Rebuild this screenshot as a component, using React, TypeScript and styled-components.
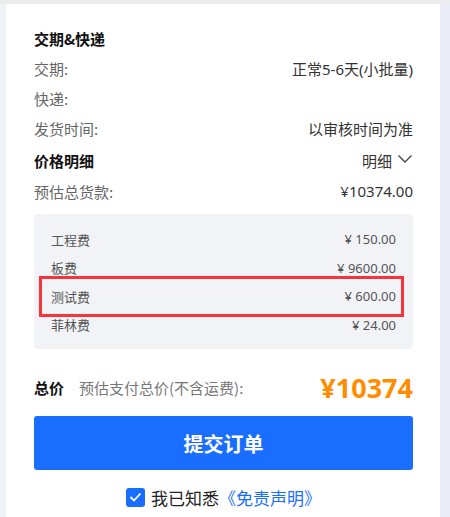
import React from "react";
import styled, { createGlobalStyle } from "styled-components";

const GlobalStyle = createGlobalStyle`
    html, body {
        margin: 0;
        padding: 0;
        background: #eef0f7;
        font-family: "Noto Sans", "Noto Sans CJK SC", sans-serif;
    }
`;

const Page = styled.div`
    width: 450px;
    height: 517px;
    overflow: hidden;
    border-top: 4px solid #ebebeb;
    box-sizing: border-box;
    padding-left: 6px;
    background: linear-gradient(to right, #f1f2f7 0, #f1f2f7 6px, #e9ecf6 6px);
`;

const Card = styled.div`
    width: 434px;
    min-height: 520px;
    background: #ffffff;
    box-sizing: border-box;
    padding: 19px 27px 0 28px;
`;

const Row = styled.div<{ $h?: number }>`
    display: flex;
    align-items: center;
    justify-content: space-between;
    height: ${(p) => p.$h ?? 30}px;
`;

const Title = styled.div`
    font-size: 15px;
    font-weight: 700;
    color: #111;
    font-family: "Noto Sans CJK SC", sans-serif;
`;

const Label = styled.div`
    font-size: 15px;
    color: #666;
    font-family: "Noto Sans CJK SC", sans-serif;
`;

const Value = styled.div`
    font-size: 15px;
    color: #333;
    font-family: "Noto Sans", "Noto Sans CJK SC", sans-serif;
`;

const Toggle = styled.div`
    display: flex;
    align-items: center;
    gap: 5px;
    font-size: 15px;
    color: #333;
    font-family: "Noto Sans CJK SC", sans-serif;
    svg {
        margin-top: -2px;
    }
`;

const DetailBox = styled.div`
    margin-top: 7px;
    background: #f2f3f7;
    border-radius: 4px;
    padding: 11px 17px 10px 17px;
`;

const FeeRow = styled.div<{ $marked?: boolean }>`
    position: relative;
    display: flex;
    align-items: center;
    justify-content: space-between;
    height: 28.5px;
    font-size: 13px;
    color: #555;

    &::after {
        content: "";
        display: ${(p) => (p.$marked ? "block" : "none")};
        position: absolute;
        left: -12px;
        right: -8px;
        top: -6px;
        bottom: -6px;
        border: 3px solid #f8333a;
    }
`;

const FeeName = styled.span`
    font-family: "Noto Sans CJK SC", sans-serif;
`;

const FeeValue = styled.span`
    font-family: "Noto Sans", sans-serif;
`;

const TotalRow = styled.div`
    display: flex;
    align-items: center;
    height: 30px;
    margin-top: 23px;
`;

const TotalLabel = styled.span`
    font-size: 15px;
    font-weight: 700;
    color: #111;
    font-family: "Noto Sans CJK SC", sans-serif;
    margin-right: 15px;
`;

const TotalHint = styled.span`
    flex: 1;
    font-size: 15px;
    color: #777;
    font-family: "Noto Sans CJK SC", sans-serif;
`;

const TotalPrice = styled.span`
    font-size: 27px;
    font-weight: 700;
    color: #ff8c00;
    font-family: "Noto Sans", sans-serif;
`;

const SubmitButton = styled.button`
    display: block;
    width: 100%;
    height: 54px;
    margin-top: 14px;
    border: none;
    border-radius: 3px;
    background: #1a6eff;
    color: #fff;
    font-size: 20px;
    font-weight: 700;
    font-family: "Noto Sans CJK SC", sans-serif;
    cursor: pointer;
`;

const AgreeRow = styled.label`
    display: flex;
    align-items: center;
    justify-content: center;
    gap: 6px;
    height: 28px;
    margin-top: 13px;
    font-size: 17px;
    color: #222;
    font-family: "Noto Sans CJK SC", sans-serif;
`;

const CheckBox = styled.span`
    display: inline-flex;
    align-items: center;
    justify-content: center;
    width: 19px;
    height: 19px;
    border-radius: 3px;
    background: #1a6eff;
`;

const Link = styled.span`
    color: #1a6eff;
    margin-left: -6px;
`;

const fees = [
    { name: "工程费", value: "¥ 150.00" },
    { name: "板费", value: "¥ 9600.00" },
    { name: "测试费", value: "¥ 600.00", marked: true },
    { name: "菲林费", value: "¥ 24.00" },
];

export default function App() {
    return (
        <>
            <GlobalStyle />
            <Page>
                <Card>
                    <Row>
                        <Title>交期&快递</Title>
                    </Row>
                    <Row>
                        <Label>交期:</Label>
                        <Value>正常5-6天(小批量)</Value>
                    </Row>
                    <Row>
                        <Label>快递:</Label>
                    </Row>
                    <Row>
                        <Label>发货时间:</Label>
                        <Value>以审核时间为准</Value>
                    </Row>
                    <Row style={{ marginTop: 2 }}>
                        <Title>价格明细</Title>
                        <Toggle>
                            明细
                            <svg width="16" height="10" viewBox="0 0 16 10">
                                <path d="M1.5 1.5 L8 8 L14.5 1.5" fill="none" stroke="#444" strokeWidth="1.3" />
                            </svg>
                        </Toggle>
                    </Row>
                    <Row $h={32}>
                        <Label>预估总货款:</Label>
                        <Value>¥10374.00</Value>
                    </Row>
                    <DetailBox>
                        {fees.map((f) => (
                            <FeeRow key={f.name} $marked={f.marked}>
                                <FeeName>{f.name}</FeeName>
                                <FeeValue>{f.value}</FeeValue>
                            </FeeRow>
                        ))}
                    </DetailBox>
                    <TotalRow>
                        <TotalLabel>总价</TotalLabel>
                        <TotalHint>预估支付总价(不含运费):</TotalHint>
                        <TotalPrice>¥10374</TotalPrice>
                    </TotalRow>
                    <SubmitButton>提交订单</SubmitButton>
                    <AgreeRow>
                        <CheckBox>
                            <svg width="13" height="10" viewBox="0 0 13 10">
                                <path d="M1.5 5 L5 8.5 L11.5 1.5" fill="none" stroke="#fff" strokeWidth="1.8" />
                            </svg>
                        </CheckBox>
                        我已知悉
                        <Link>《免责声明》</Link>
                    </AgreeRow>
                </Card>
            </Page>
        </>
    );
}
